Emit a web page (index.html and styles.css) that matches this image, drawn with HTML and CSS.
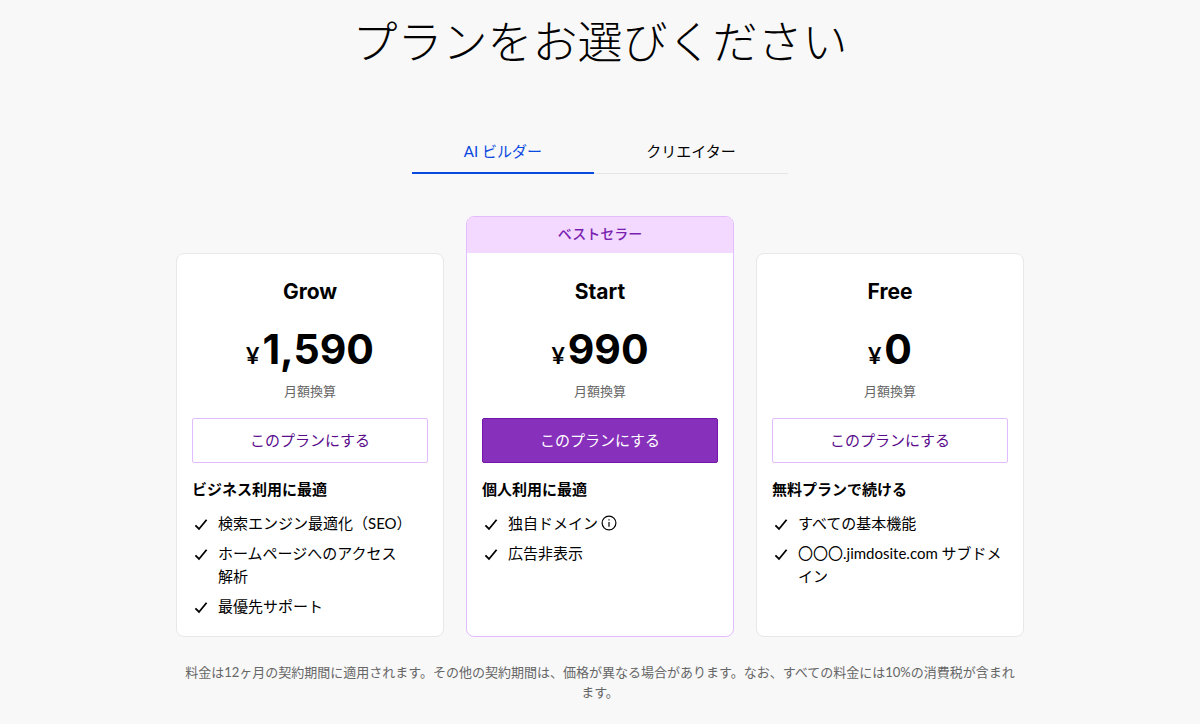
FILE: index.html
```
<!DOCTYPE html>
<html lang="ja">
<head>
    <meta charset="UTF-8">
    <meta name="viewport" content="width=device-width, initial-scale=1.0">
    <title>プランをお選びください</title>
    <link rel="stylesheet" href="styles.css">
</head>
<body>
    <svg class="sprite" aria-hidden="true">
        <symbol id="check" viewBox="0 0 16 16">
            <path d="M2.4 9.4 6 13 13.6 3.8" fill="none" stroke="currentColor" stroke-width="1.8"/>
        </symbol>
    </svg>
    <main class="pricing">
        <h1 class="title">プランをお選びください</h1>
        <div class="tabs" role="tablist">
            <button class="tab active" role="tab" aria-selected="true">AI ビルダー</button>
            <button class="tab" role="tab" aria-selected="false">クリエイター</button>
        </div>
        <div class="plans">
            <section class="plan">
                <h2 class="plan-name">Grow</h2>
                <p class="price"><span class="yen">¥</span>1,590</p>
                <p class="period">月額換算</p>
                <button class="choose">このプランにする</button>
                <h3 class="plan-for">ビジネス利用に最適</h3>
                <ul class="features">
                    <li><svg class="check"><use href="#check"/></svg><span>検索エンジン最適化（SEO）</span></li>
                    <li><svg class="check"><use href="#check"/></svg><span>ホームページへのアクセス<br>解析</span></li>
                    <li><svg class="check"><use href="#check"/></svg><span>最優先サポート</span></li>
                </ul>
            </section>
            <section class="plan best">
                <p class="badge">ベストセラー</p>
                <h2 class="plan-name">Start</h2>
                <p class="price"><span class="yen">¥</span>990</p>
                <p class="period">月額換算</p>
                <button class="choose">このプランにする</button>
                <h3 class="plan-for">個人利用に最適</h3>
                <ul class="features">
                    <li>
                        <svg class="check"><use href="#check"/></svg>
                        <span>独自ドメイン</span>
                        <svg class="info" viewBox="0 0 16 16">
                            <circle cx="8" cy="8" r="6.9" fill="none" stroke="currentColor" stroke-width="1.2"/>
                            <path d="M8 4.2v1.4M8 7v4.8" stroke="currentColor" stroke-width="1.2"/>
                        </svg>
                    </li>
                    <li><svg class="check"><use href="#check"/></svg><span>広告非表示</span></li>
                </ul>
            </section>
            <section class="plan">
                <h2 class="plan-name">Free</h2>
                <p class="price"><span class="yen">¥</span>0</p>
                <p class="period">月額換算</p>
                <button class="choose">このプランにする</button>
                <h3 class="plan-for">無料プランで続ける</h3>
                <ul class="features">
                    <li><svg class="check"><use href="#check"/></svg><span>すべての基本機能</span></li>
                    <li><svg class="check"><use href="#check"/></svg><span>〇〇〇.jimdosite.com サブドメイン</span></li>
                </ul>
            </section>
        </div>
        <p class="note">料金は12ヶ月の契約期間に適用されます。その他の契約期間は、価格が異なる場合があります。なお、すべての料金には10%の消費税が含まれます。</p>
    </main>
</body>
</html>
```
FILE: styles.css
```
* {
    box-sizing: border-box;
}

body {
    margin: 0;
    background-color: #f8f8f8;
    color: #000;
    font-family: Lato, "Noto Sans CJK JP", sans-serif;
    font-size: 15px;
    line-height: 23px;
}

h1, h2, h3, p, ul {
    margin: 0;
    padding: 0;
}

button {
    font: inherit;
    cursor: pointer;
}

.sprite {
    display: none;
}

.pricing {
    max-width: 848px;
    margin: 0 auto;
    padding: 12px 0 20px;
}

.title {
    font-size: 45px;
    font-weight: 300;
    line-height: 60px;
    text-align: center;
}

.tabs {
    display: grid;
    grid-template-columns: 15fr 16fr;
    width: 376px;
    max-width: 100%;
    margin: 58px auto 42px;
    box-shadow: inset 0 -1px #e6e6e6;
}

.tab {
    padding: 10px 0 9px;
    background: none;
    border: none;
    border-bottom: 2px solid transparent;
}

.tab.active {
    color: #0849e0;
    border-color: #0849e0;
}

.plans {
    display: grid;
    grid-template-columns: repeat(3, 1fr);
    gap: 22px;
}

.plan {
    margin-top: 37px;
    padding: 24px 15px 11px;
    background-color: #fff;
    border: 1px solid #e8e8e8;
    border-radius: 8px;
    text-align: center;
}

.plan.best {
    margin-top: 0;
    padding-top: 0;
    border-color: #e2bcff;
}

.badge {
    margin: 0 -15px 25px;
    padding: 5px 0 8px;
    background-color: #f3d9ff;
    border-radius: 7px 7px 0 0;
    color: #7a1fb0;
    font-size: 14px;
    font-weight: 500;
}

.plan-name {
    font-family: Inter, sans-serif;
    font-size: 21px;
    font-weight: 700;
    line-height: 28px;
}

.price {
    margin-top: 15px;
    font-family: Inter, sans-serif;
    font-size: 41px;
    font-weight: 700;
    line-height: 56px;
}

.yen {
    margin-right: 3px;
    font-family: Lato, sans-serif;
    font-size: 23px;
}

.period {
    margin-top: -3px;
    color: #666;
    font-size: 13px;
}

.choose {
    width: 100%;
    margin-top: 15px;
    padding: 10px 0;
    background-color: #fff;
    border: 1px solid #e2bcff;
    border-radius: 2px;
    color: #5a0c8c;
}

.best .choose {
    background-color: #8730bb;
    border-color: #7317ab;
    color: #fff;
}

.plan-for {
    margin-top: 15px;
    font-size: 15px;
    font-weight: 700;
    text-align: left;
}

.features {
    margin-top: 11px;
    list-style: none;
    text-align: left;
}

.features li {
    display: flex;
    margin-bottom: 7px;
}

.check {
    flex: none;
    width: 16px;
    height: 16px;
    margin: 4px 9px 0 1px;
}

.info {
    flex: none;
    width: 16px;
    height: 16px;
    margin: 3px 0 0 3px;
}

.note {
    margin-top: 25px;
    padding: 0 6px;
    color: #666;
    font-size: 13px;
    line-height: 20px;
    text-align: center;
}
```
